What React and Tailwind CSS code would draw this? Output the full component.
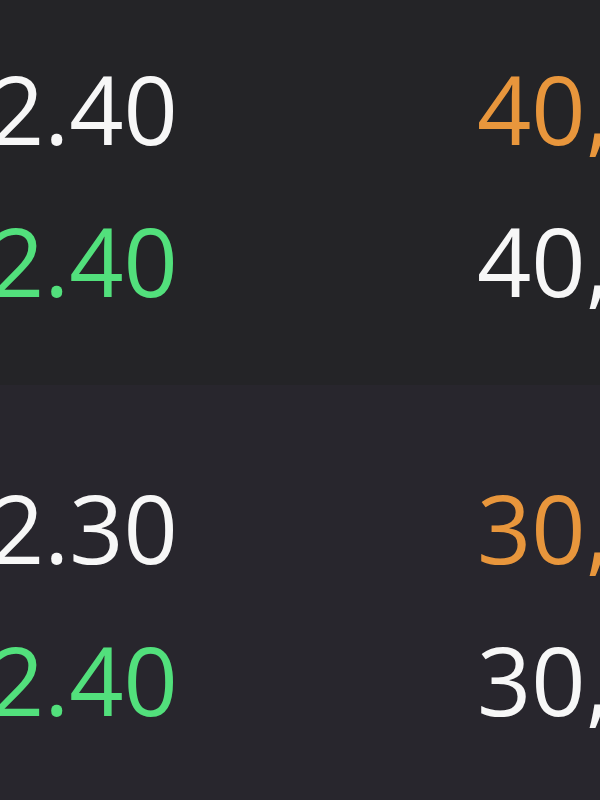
const sections = [
  {
    bg: 'bg-[#242427]',
    pad: 'pt-[32px] pb-[49px]',
    rows: [
      { price: '2.40', priceColor: 'text-[#f7f7f7]', qty: '40,000', qtyColor: 'text-[#e8963c]' },
      { price: '2.40', priceColor: 'text-[#52e07c]', qty: '40,000', qtyColor: 'text-[#f7f7f7]' },
    ],
  },
  {
    bg: 'bg-[#28262d]',
    pad: 'pt-[66px] pb-[40px]',
    rows: [
      { price: '2.30', priceColor: 'text-[#f7f7f7]', qty: '30,000', qtyColor: 'text-[#e8963c]' },
      { price: '2.40', priceColor: 'text-[#52e07c]', qty: '30,000', qtyColor: 'text-[#f7f7f7]' },
    ],
  },
];

export default function App() {
  return (
    <div className="w-[600px] h-[800px] overflow-hidden flex flex-col bg-[#28262d] font-['Open_Sans',sans-serif]">
      {sections.map((section, i) => (
        <div key={i} className={`${section.bg} ${section.pad} ${i === 1 ? 'flex-1' : ''}`}>
          {section.rows.map((row, j) => (
            <div key={j} className="flex whitespace-nowrap text-[95px] leading-[152px]">
              <span className={`w-[487px] shrink-0 -ml-[10px] ${row.priceColor}`}>{row.price}</span>
              <span className={row.qtyColor}>{row.qty}</span>
            </div>
          ))}
        </div>
      ))}
    </div>
  );
}
